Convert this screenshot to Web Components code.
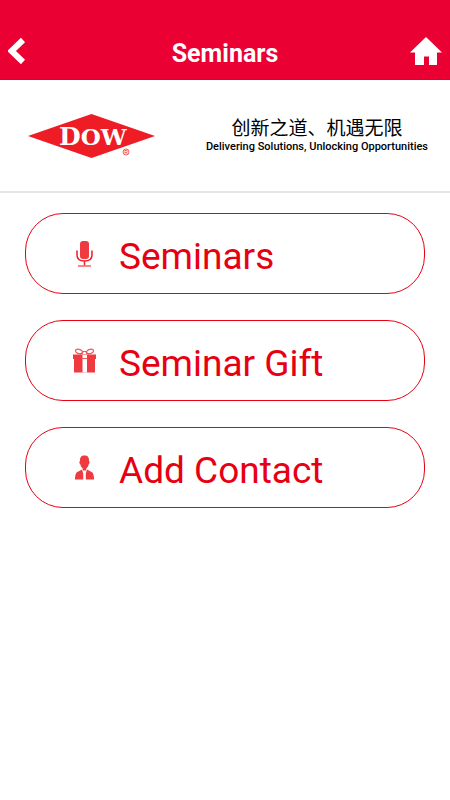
<!DOCTYPE html>
<html lang="en">
<head>
<meta charset="utf-8">
<meta name="viewport" content="width=device-width, initial-scale=1">
<title>Seminars</title>
<style>
  body {
    margin: 0;
    background: #fff;
    font-family: Roboto, "Liberation Sans", sans-serif;
  }
</style>
</head>
<body>
<seminar-page></seminar-page>

<script>
class AppHeader extends HTMLElement {
  constructor() {
    super();
    this.attachShadow({ mode: 'open' });
  }

  connectedCallback() {
    this.shadowRoot.innerHTML = `
      <style>
        :host {
          display: block;
          background: #eb0033;
          color: #fff;
          padding-top: 28px;
          border-bottom: 1px solid #e60012;
        }

        header {
          display: grid;
          grid-template-columns: 48px 1fr 48px;
          align-items: center;
          height: 51px;
        }

        h1 {
          margin: 0;
          font-size: 25px;
          line-height: 34px;
          font-weight: 700;
          text-align: center;
        }

        button {
          display: flex;
          align-items: center;
          align-self: start;
          width: 48px;
          height: 46px;
          padding: 0 8px;
          border: none;
          background: none;
          color: inherit;
        }

        .home { justify-content: flex-end; }
        svg { display: block; flex: none; }
      </style>
      <header>
        <button type="button" aria-label="Back">
          <svg width="18" height="28" viewBox="0 0 18 28">
            <path d="M15 3 3.500 14l11.500 11" fill="none" stroke="currentColor" stroke-width="6"/>
          </svg>
        </button>
        <h1><slot></slot></h1>
        <button type="button" class="home" aria-label="Home">
          <svg width="32" height="28" viewBox="0 0 32 28">
            <path d="M16 0 32 15.500H27V28H19V19.500H14V28H5V15.500H0Z" fill="currentColor"/>
          </svg>
        </button>
      </header>
    `;
  }
}

class BrandBanner extends HTMLElement {
  constructor() {
    super();
    this.attachShadow({ mode: 'open' });
  }

  connectedCallback() {
    this.shadowRoot.innerHTML = `
      <style>
        :host {
          display: flex;
          align-items: center;
          justify-content: space-between;
          height: 111px;
          padding: 0 22px 0 28px;
          border-bottom: 2px solid #e5e5e5;
        }

        svg { display: block; }
        .tagline { text-align: center; color: #000; }
        p { margin: 0; }

        .zh {
          font-family: "Noto Sans CJK SC", sans-serif;
          font-size: 19px;
          line-height: 22px;
        }

        .en {
          font-size: 11px;
          font-weight: 500;
          line-height: 18px;
        }
      </style>
      <svg width="127" height="46" viewBox="0 0 127 46" role="img" aria-label="Dow">
        <path d="M0 23 63.500 1 127 23 63.500 45Z" fill="#ee1c25"/>
        <g font-family="DejaVu Serif, serif" font-weight="700" fill="#fff">
          <text x="31" y="32" font-size="25">D<tspan font-size="23">OW</tspan></text>
        </g>
        <circle cx="98" cy="39" r="3" fill="none" stroke="#ee1c25" stroke-width=".7"/>
        <text x="98" y="41" font-family="Liberation Sans, sans-serif" font-size="5" text-anchor="middle" fill="#ee1c25">R</text>
      </svg>
      <div class="tagline">
        <p class="zh" lang="zh">创新之道、机遇无限</p>
        <p class="en">Delivering Solutions, Unlocking Opportunities</p>
      </div>
    `;
  }
}

const ICONS = {
  mic: `
    <rect x="8" y="0" width="9" height="18" rx="3" fill="#ef3b3f"/>
    <path d="M5 9.500v4.500c0 4 3 6 7.500 6s7.500-2 7.500-6V9.500M12.500 20V24.500" fill="none" stroke="#ee1c25" stroke-width="1.500"/>
    <path d="M6 25h13" stroke="#f0565a" stroke-width="1.400"/>`,
  gift: `
    <path d="M1 6.500h23v4.500H1zM2 11h21v13.500H2z" fill="#ef3b3f"/>
    <path d="M10.500 7h4.500v17.500h-4.500z" fill="#fff"/>
    <path d="M10 10.500h5.500" stroke="#f0565a" stroke-width="1"/>
    <path d="M11 5.500C7.500 6 3.500 5.500 3.500 3S8 .2 11 4M14 5.500c3.500.5 7.500 0 7.500-2.500S17 .2 14 4M8 6.500l3.500-3h2l3.500 3" fill="none" stroke="#f0565a" stroke-width="1.200"/>`,
  person: `
    <path d="M12.500.5c3.400 0 4.700 2 4.500 5.500.9.500.8 2.500-.2 3-.4 2.300-1.400 3.500-2.300 4.300l-.5 2.200h-3l-.5-2.200C9.600 12.500 8.600 11.300 8.200 9c-1-.5-1.100-2.500-.2-3C7.800 2.500 9.100.5 12.500.5Z" fill="#ef3b3f"/>
    <path d="M10 14.500 4.500 17.500Q3 19.500 2.800 24.500H11.200V18.500ZM15 14.500l5.500 3q1.500 2 1.700 7H13.800V18.500Z" fill="#ef3b3f"/>`
};

class MenuButton extends HTMLElement {
  constructor() {
    super();
    this.attachShadow({ mode: 'open' });
  }

  connectedCallback() {
    const icon = ICONS[this.getAttribute('icon')] || '';

    this.shadowRoot.innerHTML = `
      <style>
        :host { display: block; }

        button {
          display: flex;
          align-items: center;
          gap: 22px;
          box-sizing: border-box;
          width: 100%;
          height: 81px;
          padding: 0 46px;
          border: 1px solid #e60012;
          border-radius: 38px;
          background: #fff;
          color: #e60012;
          font-family: inherit;
          font-size: 37px;
          line-height: 44px;
          text-align: left;
        }

        svg { display: block; flex: none; }
        span { padding-top: 6px; }
      </style>
      <button type="button">
        <svg width="25" height="26" viewBox="0 0 25 26" aria-hidden="true">${icon}</svg>
        <span><slot></slot></span>
      </button>
    `;
  }
}

class SeminarPage extends HTMLElement {
  constructor() {
    super();
    this.attachShadow({ mode: 'open' });
  }

  connectedCallback() {
    this.shadowRoot.innerHTML = `
      <style>
        :host { display: block; }

        main {
          display: flex;
          flex-direction: column;
          gap: 26px;
          padding: 20px 25px;
        }
      </style>
      <app-header>Seminars</app-header>
      <brand-banner></brand-banner>
      <main>
        <menu-button icon="mic">Seminars</menu-button>
        <menu-button icon="gift">Seminar Gift</menu-button>
        <menu-button icon="person">Add Contact</menu-button>
      </main>
    `;
  }
}

customElements.define('app-header', AppHeader);
customElements.define('brand-banner', BrandBanner);
customElements.define('menu-button', MenuButton);
customElements.define('seminar-page', SeminarPage);
</script>
</body>
</html>
